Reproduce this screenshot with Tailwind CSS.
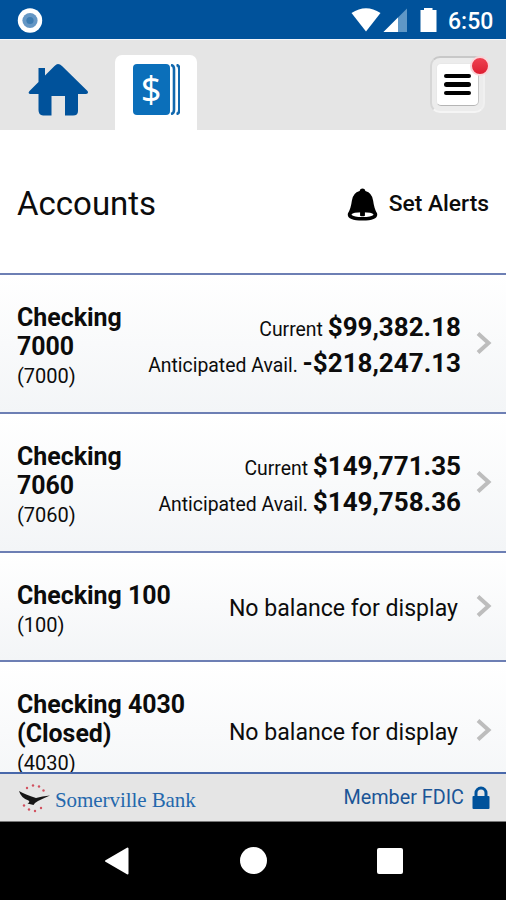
<!DOCTYPE html>
<html lang="en">
<head>
<meta charset="utf-8">
<title>Accounts</title>
<script src="https://cdn.jsdelivr.net/npm/@tailwindcss/browser@4"></script>
</head>
<body class="w-[506px] h-[900px] overflow-hidden bg-white text-[#0c0c0c] font-['Roboto',sans-serif] flex flex-col whitespace-nowrap">
<svg class="hidden"><symbol id="chev" viewBox="0 0 16 24"><path d="M2 2.500 12.500 12 2 21.500" fill="none" stroke="#bdbdbd" stroke-width="4"/></symbol></svg>

<header class="h-[39px] shrink-0 bg-[#00529b] flex items-center pl-[17px] pr-[13px]">
  <svg class="w-[26px] h-[26px] mt-[2px]" viewBox="0 0 26 26"><circle cx="13" cy="12.500" r="12.200" fill="#fff"/><circle cx="13" cy="12.500" r="7.600" fill="#6597c5"/><circle cx="13" cy="12.500" r="3.600" fill="#3d7cb2"/></svg>
  <svg class="ml-auto w-[90px] h-[39px]" viewBox="350 0 90 39"><path d="M351.500 13Q366 3.500 380.500 13L366 31.500Z" fill="#fff"/><path d="M407 8.500V32H383.500Z" fill="#5f97c6"/><path d="M398 17.500V32H383.500Z" fill="#fff"/><path d="M424 8h8.500v2H436.500V32H420.500V10H424Z" fill="#fff"/></svg>
  <span class="ml-[8px] mt-[4px] text-[23px] leading-[28px] font-medium text-white w-[45px]">6:50</span>
</header>

<nav class="h-[91px] shrink-0 bg-[#e5e5e5] border-t border-[#f4f6fa] flex items-end">
  <svg class="ml-[28px] mb-[13px] w-[61px] h-[54px]" viewBox="28 63 61 54"><path d="M58 64Q60 64 62 66L87.500 91Q89 93.500 86 94H78V111Q78 115.500 73 115.500H65V96H51.500V115.500H43Q38.500 115 38.500 110V94H30Q27.500 93.500 29.500 91L38.500 82V68H45V75.500L54.500 66Q56.500 64 58 64Z" fill="#00529b"/></svg>
  <div class="ml-[26px] w-[82px] h-[75px] rounded-t-[7px] bg-white flex justify-center pt-[9px]">
    <div class="relative w-[47px] h-[51px]">
      <svg class="w-[47px] h-[51px]" viewBox="0 0 47 51"><rect width="37" height="51" rx="4" fill="#0b6fba"/><path d="M38 1Q41 1.500 41 5V46Q41 49.500 38 50M43.500 1Q46.300 1.500 46.300 5V46Q46.300 49.500 43.500 50" fill="none" stroke="#1168ae" stroke-width="2.600"/></svg>
      <span class="absolute left-0 top-[4px] w-[37px] text-center text-white text-[36px] leading-[42px] font-['Noto_Sans']">$</span>
    </div>
  </div>
  <div class="relative ml-auto mr-[21px] mb-[17px] w-[55px] h-[57px] rounded-[10px] border-2 border-t-[#c8c8c8] border-l-[#d6d6d6] border-b-[#f5f5f5] border-r-[#f0f0f0] bg-[#ececec] flex items-center justify-center">
    <div class="w-[43px] h-[43px] rounded-[5px] bg-white border border-[#e8e8e8] border-b-[#b5b5b5] border-r-[#c5c5c5] flex flex-col items-center justify-center gap-[4px]">
      <i class="w-[27px] h-[4.500px] rounded-full bg-black"></i><i class="w-[27px] h-[4.500px] rounded-full bg-black"></i><i class="w-[27px] h-[4.500px] rounded-full bg-black"></i>
    </div>
    <i class="absolute -right-[7px] -top-[2px] w-[20px] h-[20px] rounded-full border-2 border-white/80 bg-linear-to-b from-[#ef4050] to-[#dd1c30]"></i>
  </div>
</nav>

<section class="h-[143px] shrink-0 flex items-center justify-between pl-[17px] pr-[17px] pt-[5px]">
  <h1 class="text-[33px] leading-[40px]">Accounts</h1>
  <div class="flex items-center">
    <svg class="w-[31px] h-[33px] mr-[11px]" viewBox="0 0 32 34"><path d="M16 .5Q18.500 .5 19 3Q26 5 27 13Q28 21 31 26Q33 33.500 16 33.500Q-1 33.500 1 26Q4 21 5 13Q6 5 13 3Q13.500 .5 16 .5Z" fill="#000"/><path d="M4.500 27.500Q6 25 16 25T27.500 27.500Q25 30 16 30T4.500 27.500Z" fill="#fff"/><path d="M13.500 24h5v4.500q-2.500 1.500-5 0Z" fill="#000"/></svg>
    <span class="text-[22.800px] leading-[28px] font-medium">Set Alerts</span>
  </div>
</section>

<main class="h-[499px] shrink-0 overflow-hidden">
  <div class="h-[139px] border-t-2 border-[#6d7fb4] bg-linear-to-b from-white to-[#f3f5f7] flex pl-[17px] pr-[14px]">
    <div class="pt-[28px] w-[120px]"><div class="text-[24.900px] leading-[29px] font-bold">Checking<br>7000</div><div class="text-[20px] leading-[30px]">(7000)</div></div>
    <div class="ml-auto pt-[34px] text-right text-[19.400px] leading-[36px]"><div class="h-[36px]">Current <b class="text-[26px]">$99,382.18</b></div><div class="h-[36px]">Anticipated Avail. <b class="text-[26px]">-$218,247.13</b></div></div>
    <svg class="ml-[15px] mt-[56px] w-[16px] h-[24px]"><use href="#chev"/></svg>
  </div>
  <div class="h-[139px] border-t-2 border-[#6d7fb4] bg-linear-to-b from-white to-[#f3f5f7] flex pl-[17px] pr-[14px]">
    <div class="pt-[28px] w-[120px]"><div class="text-[24.900px] leading-[29px] font-bold">Checking<br>7060</div><div class="text-[20px] leading-[30px]">(7060)</div></div>
    <div class="ml-auto pt-[34px] text-right text-[19.400px] leading-[36px]"><div class="h-[36px]">Current <b class="text-[26px]">$149,771.35</b></div><div class="h-[36px]">Anticipated Avail. <b class="text-[26px]">$149,758.36</b></div></div>
    <svg class="ml-[15px] mt-[56px] w-[16px] h-[24px]"><use href="#chev"/></svg>
  </div>
  <div class="h-[109px] border-t-2 border-[#6d7fb4] bg-linear-to-b from-white to-[#f3f5f7] flex pl-[17px] pr-[14px]">
    <div class="pt-[28px]"><div class="text-[24.900px] leading-[29px] font-bold">Checking 100</div><div class="text-[20px] leading-[30px]">(100)</div></div>
    <div class="ml-auto pt-[41px] text-[23.100px] leading-[30px]">No balance for display</div>
    <svg class="ml-[18px] mt-[41px] w-[16px] h-[24px]"><use href="#chev"/></svg>
  </div>
  <div class="h-[139px] border-t-2 border-[#6d7fb4] bg-linear-to-b from-white to-[#f3f5f7] flex pl-[17px] pr-[14px]">
    <div class="pt-[28px]"><div class="text-[24.900px] leading-[29px] font-bold">Checking 4030<br>(Closed)</div><div class="text-[20px] leading-[30px]">(4030)</div></div>
    <div class="ml-auto pt-[56px] text-[23.100px] leading-[30px]">No balance for display</div>
    <svg class="ml-[18px] mt-[56px] w-[16px] h-[24px]"><use href="#chev"/></svg>
  </div>
</main>

<footer class="h-[50px] shrink-0 bg-[#e5e5e5] border-t-2 border-t-[#4868aa] border-b border-b-[#777] flex items-center pl-[18px] pr-[16px]">
  <svg class="w-[33px] h-[32px]" viewBox="18 781 33 32"><path d="M19 790Q25 793.500 36 797Q42 795 50 794.500Q43 797.500 38 800L35 802 33.500 804 27.500 802.500Q30.500 801 28.500 799.500Q21 797 19 790Z" fill="#151515"/><g fill="#d2505f"><circle cx="27" cy="787" r="1.200"/><circle cx="33" cy="784.500" r="1.200"/><circle cx="39" cy="785.500" r="1.200"/><circle cx="43.500" cy="789.500" r="1.200"/><circle cx="24" cy="804.500" r="1.200"/><circle cx="29" cy="808.500" r="1.200"/><circle cx="35" cy="810" r="1.200"/><circle cx="41" cy="807" r="1.200"/></g></svg>
  <span class="ml-[4px] mt-[4px] text-[21px] leading-[26px] font-['Liberation_Serif',serif] text-[#2468ad] tracking-[-0.070px]">Somerville Bank</span>
  <span class="ml-auto mt-[1px] text-[19.800px] leading-[26px] text-[#1b5597]">Member FDIC</span>
  <svg class="ml-[8px] w-[18px] h-[23px]" viewBox="0 0 18 23"><path d="M4 11V7a5 5 0 0 1 10 0v4" fill="none" stroke="#00529b" stroke-width="3"/><rect x=".5" y="10" width="17" height="13" rx="1" fill="#00529b"/></svg>
</footer>

<div class="grow bg-black flex items-start pt-[25px] pl-[104px]">
  <svg class="w-[25px] h-[28px]" viewBox="0 0 25 28"><path d="M23.500 1.500V26.500L2 14Z" fill="#fff" stroke="#fff" stroke-width="2" stroke-linejoin="round"/></svg>
  <div class="ml-[111px] w-[27px] h-[27px] rounded-full bg-white"></div>
  <div class="ml-[110px] mt-[1px] w-[26px] h-[26px] rounded-[2px] bg-white"></div>
</div>
</body>
</html>
